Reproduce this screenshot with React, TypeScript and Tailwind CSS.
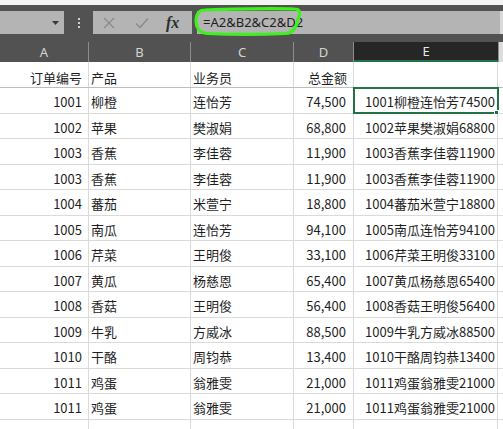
import React from "react";

const rows: [string, string, string, string][] = [
  ["1001", "柳橙", "连怡芳", "74,500"],
  ["1002", "苹果", "樊淑娟", "68,800"],
  ["1003", "香蕉", "李佳蓉", "11,900"],
  ["1003", "香蕉", "李佳蓉", "11,900"],
  ["1004", "蕃茄", "米萱宁", "18,800"],
  ["1005", "南瓜", "连怡芳", "94,100"],
  ["1006", "芹菜", "王明俊", "33,100"],
  ["1007", "黄瓜", "杨慈恩", "65,400"],
  ["1008", "香菇", "王明俊", "56,400"],
  ["1009", "牛乳", "方威冰", "88,500"],
  ["1010", "干酪", "周钧恭", "13,400"],
  ["1011", "鸡蛋", "翁雅雯", "21,000"],
  ["1011", "鸡蛋", "翁雅雯", "21,000"],
];

const cols = "grid grid-cols-[89px_102px_103px_60px_144px_1fr]";
const font = { fontFamily: '"Noto Sans CJK SC", "Noto Sans", sans-serif' };

export default function App() {
  return (
    <div className="relative w-[503px] h-[429px] overflow-hidden bg-white text-[#1f1f1f]" style={font}>
      <div className="h-[5px] bg-[#f4f4f4]" />

      {/* toolbar */}
      <div className="h-[37px] bg-[#525252] flex pt-[6px]">
        <div className="w-[64px] h-[23px] bg-[#b4b4b4] flex items-center justify-end pr-[5px]">
          <svg width="7" height="4" viewBox="0 0 7 4">
            <path d="M0 0h7L3.5 4z" fill="#3a3a3a" />
          </svg>
        </div>
        <div className="w-[29px] flex flex-col items-center justify-center gap-[2px] h-[23px]">
          <span className="w-[2px] h-[2px] bg-[#d0d0d0]" />
          <span className="w-[2px] h-[2px] bg-[#d0d0d0]" />
          <span className="w-[2px] h-[2px] bg-[#d0d0d0]" />
        </div>
        <div className="w-[99px] h-[23px] bg-[#b4b4b4] flex items-center">
          <svg className="ml-[10px]" width="12" height="12" viewBox="0 0 12 12">
            <path d="M1 1l10 10M11 1L1 11" stroke="#8a8a8a" strokeWidth="1.3" />
          </svg>
          <svg className="ml-[20px]" width="14" height="12" viewBox="0 0 14 12">
            <path d="M1 6.5l4 4L13 1.5" stroke="#8a8a8a" strokeWidth="1.4" fill="none" />
          </svg>
          <span
            className="ml-[17px] text-[16px] italic font-bold text-[#2e2e2e] leading-none"
            style={{ fontFamily: '"Liberation Serif", serif' }}
          >
            fx
          </span>
        </div>
        <div className="w-[5px]" />
        <div className="flex-1 h-[23px] bg-[#b4b4b4] flex items-center pl-[6px] text-[13px] text-[#1f1f1f]" style={{ fontFamily: '"Noto Sans", sans-serif' }}>
          =A2&amp;B2&amp;C2&amp;D2
        </div>
        <div className="w-[3px] h-[23px] bg-[#d9d9d9]" />
      </div>

      {/* column headers */}
      <div className={`${cols} h-[20px] bg-[#525252] text-[13px] text-[#d4d4d4]`} style={{ fontFamily: '"Noto Sans", sans-serif' }}>
        {["A", "B", "C", "D"].map((c) => (
          <div key={c} className="flex items-center justify-center border-r border-[#8c8c8c] leading-none">
            {c}
          </div>
        ))}
        <div className="flex items-center justify-center bg-[#262626] text-[#e8e8e8] border-b-2 border-[#217346] leading-none">
          E
        </div>
        <div className="bg-[#dcdcdc] border-l border-[#8c8c8c]" />
      </div>

      {/* header row */}
      <div className={`${cols} h-[26px] text-[13px] border-b border-[#bdbdbd]`}>
        <div className="flex items-end justify-end pr-[6px] border-r border-[#dadada]">订单编号</div>
        <div className="flex items-end pl-[2px] border-r border-[#dadada]">产品</div>
        <div className="flex items-end pl-[2px] border-r border-[#dadada]">业务员</div>
        <div className="flex items-end justify-end pr-[6px] border-r border-[#dadada]">总金额</div>
        <div className="border-r border-[#dadada]" />
        <div />
      </div>

      {rows.map((r, i) => (
        <div key={i} className={`${cols} h-[25.5px] text-[13px] border-b border-[#dadada]`}>
          <div className="flex items-end pb-[1px] justify-end pr-[6px] border-r border-[#dadada]">{r[0]}</div>
          <div className="flex items-end pb-[1px] pl-[2px] border-r border-[#dadada]">{r[1]}</div>
          <div className="flex items-end pb-[1px] pl-[2px] border-r border-[#dadada]">{r[2]}</div>
          <div className="flex items-end pb-[1px] justify-end pr-[7px] border-r border-[#dadada]">{r[3]}</div>
          <div
            className={`relative flex items-end pb-[1px] justify-end pr-[2px] border-r border-[#dadada] whitespace-nowrap ${
              i === 0 ? "outline-2 outline-[#217346] -outline-offset-1" : ""
            }`}
          >
            {r[0] + r[1] + r[2] + r[3].replace(",", "")}
            {i === 0 && <span className="absolute right-[-2px] bottom-[-2px] w-[5px] h-[5px] bg-[#217346] border border-white" />}
          </div>
          <div />
        </div>
      ))}
      <div className={`${cols} h-[20px]`}>
        <div className="border-r border-[#dadada]" />
        <div className="border-r border-[#dadada]" />
        <div className="border-r border-[#dadada]" />
        <div className="border-r border-[#dadada]" />
        <div className="border-r border-[#dadada]" />
        <div />
      </div>

      {/* hand-drawn highlight */}
      <svg className="absolute left-[193px] top-[5px]" width="112" height="32" viewBox="0 0 112 32">
        <path
          d="M12 5 C40 4 82 3 102 4 C108 4 107 9 105 15 C103 23 100 28 93 28.5 C70 29.5 35 29.5 14 28.5 C6 28 3 22 3 16 C3 9 6 5 12 5 Z"
          fill="none"
          stroke="#3ef01c"
          strokeWidth="3.2"
        />
      </svg>
    </div>
  );
}
